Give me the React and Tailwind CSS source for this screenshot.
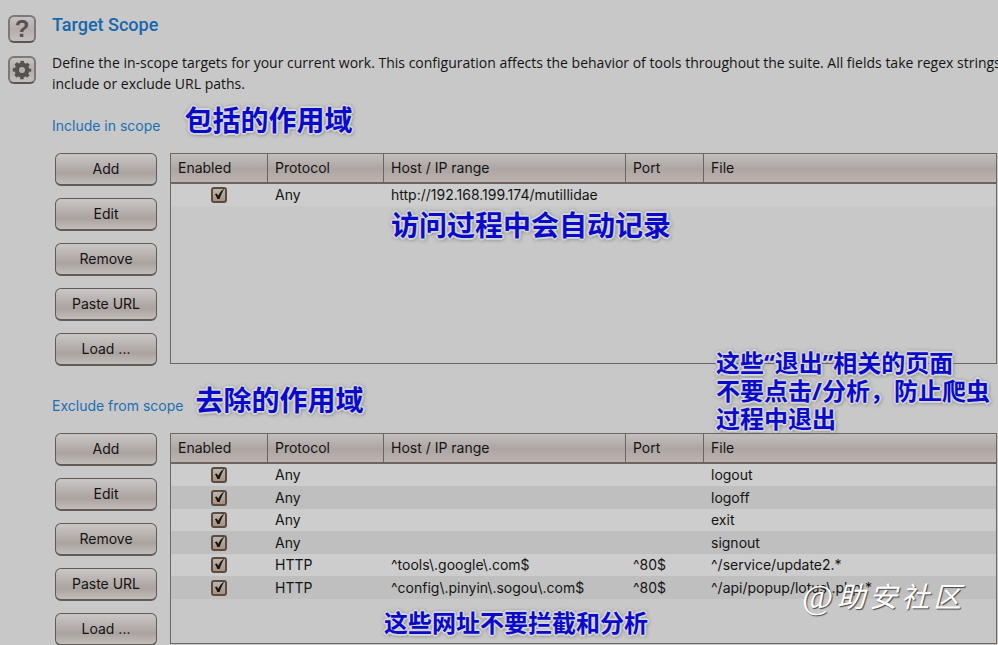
import React from "react";

const BUTTONS = ["Add", "Edit", "Remove", "Paste URL", "Load ..."];

const INCLUDED = [
  { protocol: "Any", host: "http://192.168.199.174/mutillidae", port: "", file: "" },
];

const EXCLUDED = [
  { protocol: "Any", host: "", port: "", file: "logout" },
  { protocol: "Any", host: "", port: "", file: "logoff" },
  { protocol: "Any", host: "", port: "", file: "exit" },
  { protocol: "Any", host: "", port: "", file: "signout" },
  { protocol: "HTTP", host: "^tools\\.google\\.com$", port: "^80$", file: "^/service/update2.*" },
  { protocol: "HTTP", host: "^config\\.pinyin\\.sogou\\.com$", port: "^80$", file: "^/api/popup/lotus\\.php.*" },
];

const NOTE =
  "whitespace-nowrap font-['Noto_Sans','Noto_Sans_CJK_SC',sans-serif] font-bold text-[#0a0acb] [text-shadow:2px_0_1px_#d6d6d6,-2px_0_1px_#d6d6d6,0_2px_1px_#d6d6d6,0_-2px_1px_#d6d6d6,1px_1px_0_#d6d6d6,-1px_-1px_0_#d6d6d6,1px_-1px_0_#d6d6d6,-1px_1px_0_#d6d6d6,0_0_4px_#666,1px_1px_4px_#666]";

function Note({ className, children }) {
  return <p className={`${NOTE} ${className}`}>{children}</p>;
}

function IconButton({ label, children }) {
  return (
    <button
      type="button"
      aria-label={label}
      className="flex size-7 items-center justify-center rounded-md border-2 border-[#7d7775] border-b-[#5b5654] bg-linear-to-b from-[#c6c2c1] via-[#b4adab] to-[#c4bebc] text-[#555250]"
    >
      {children}
    </button>
  );
}

function Tick() {
  return (
    <span className="relative mx-auto block size-4">
      <input
        type="checkbox"
        defaultChecked
        aria-label="Enabled"
        className="peer block size-4 appearance-none rounded-[3px] border-2 border-[#5b4c42] bg-linear-to-b from-[#bdb5ae] to-[#a8917d]"
      />
      <svg viewBox="0 0 16 16" className="pointer-events-none absolute inset-0 hidden size-4 peer-checked:block" aria-hidden="true">
        <path d="M3.8 7.2 L5.8 6.6 L7.3 8.8 C8.6 5.8 10.2 3.2 13.4 1.4 C11.4 4.6 9.9 8 8.6 12 H6.3 C5.7 10.2 5 8.6 3.8 7.2 Z" fill="#171615" />
      </svg>
    </span>
  );
}

function ScopeTable({ label, rows }) {
  const head = "border-b-2 border-l border-[#6c6461] p-0 pb-px pl-[7px] text-left font-normal first:border-l-0";
  return (
    <div className="h-[211px] min-w-0 flex-1 border border-[#6f6764]">
      <table aria-label={label} className="w-full table-fixed border-separate border-spacing-0">
        <thead>
          <tr className="h-[30px] bg-linear-to-b from-[#c3bfbe] via-[#ada5a2] to-[#bdb6b3]">
            <th className={`${head} w-24`}>Enabled</th>
            <th className={`${head} w-[116px]`}>Protocol</th>
            <th className={`${head} w-[242px]`}>Host / IP range</th>
            <th className={`${head} w-[78px]`}>Port</th>
            <th className={head}>File</th>
          </tr>
        </thead>
        <tbody>
          {rows.map((row, i) => (
            <tr key={i} className="h-[22px] bg-[#cdcdcd] even:h-[23px] even:bg-[#bfbfbf]">
              <td><Tick /></td>
              <td className="pl-2">{row.protocol}</td>
              <td className="pl-2">{row.host}</td>
              <td className="pl-2">{row.port}</td>
              <td className="pl-2 whitespace-nowrap">{row.file}</td>
            </tr>
          ))}
        </tbody>
      </table>
    </div>
  );
}

function ScopePanel({ label, rows, children }) {
  return (
    <div className="relative flex gap-[13px] pl-[3px]">
      <div className="flex w-[102px] shrink-0 flex-col gap-3">
        {BUTTONS.map((name) => (
          <button
            key={name}
            type="button"
            className="h-[33px] rounded-md border border-b-2 border-[#625c59] bg-linear-to-b from-[#c8c4c3] from-5% via-[#aaa39f] via-65% to-[#c3bdba]"
          >
            {name}
          </button>
        ))}
      </div>
      <ScopeTable label={label} rows={rows} />
      {children}
    </div>
  );
}

function ScopeHeader({ title, note, className }) {
  return (
    <div className={`flex h-[55px] items-start pt-3.5 ${className}`}>
      <h2 className="pt-1 text-[#1c6fb4]">{title}</h2>
      <Note className="-mt-2 text-[28px] leading-8">{note}</Note>
    </div>
  );
}

export default function App() {
  return (
    <main className="flex min-h-screen gap-4 overflow-hidden bg-[#c8c8c8] pt-[15px] pr-px pl-2 font-['Inter','Noto_Sans_CJK_SC',sans-serif] text-sm leading-5 text-[#141414]">
      <div className="flex shrink-0 flex-col gap-[13px]">
        <IconButton label="Help">
          <span className="font-['Liberation_Sans',sans-serif] text-2xl leading-6 font-bold">?</span>
        </IconButton>
        <IconButton label="Options">
          <svg viewBox="0 0 20 20" className="size-5 shrink-0" fill="none" stroke="currentColor" aria-hidden="true">
            <circle cx="10" cy="10" r="5.2" strokeWidth="4.4" />
            <circle cx="10" cy="10" r="7.8" strokeWidth="2.8" strokeDasharray="3.4 2.726" strokeDashoffset="1.7" />
          </svg>
        </IconButton>
      </div>

      <div className="min-w-0 flex-1">
        <h1 className="font-['Roboto',sans-serif] text-lg leading-5 font-medium text-[#1767ae]">Target Scope</h1>
        <p className="mt-[17px] font-['Open_Sans',sans-serif] leading-[21px] whitespace-nowrap">
          Define the in-scope targets for your current work. This configuration affects the behavior of tools throughout the suite. All fields take regex strings
          <br />
          include or exclude URL paths.
        </p>

        <section>
          <ScopeHeader title="Include in scope" note="包括的作用域" className="mt-1 gap-6" />
          <ScopePanel label="Include in scope" rows={INCLUDED}>
            <Note className="absolute top-14 left-[339px] text-[28px] leading-8">访问过程中会自动记录</Note>
            <Note className="absolute top-[196px] left-[664px] z-10 text-2xl leading-7">
              这些“退出”相关的页面
              <br />
              不要点击/分析，防止爬虫
              <br />
              过程中退出
            </Note>
          </ScopePanel>
        </section>

        <section>
          <ScopeHeader title="Exclude from scope" note="去除的作用域" className="mt-3 gap-3" />
          <ScopePanel label="Exclude from scope" rows={EXCLUDED}>
            <Note className="absolute top-[176px] left-[332px] text-2xl leading-7">这些网址不要拦截和分析</Note>
            <p className="absolute top-[144px] left-[750px] flex items-center gap-1 text-[28px] leading-10 text-white italic [text-shadow:1px_1px_1px_#444]">
              <span className="font-['Liberation_Serif',serif] text-[34px] not-italic">@</span>
              <span>助</span>
              <span>安</span>
              <span>社</span>
              <span>区</span>
            </p>
          </ScopePanel>
        </section>
      </div>
    </main>
  );
}
